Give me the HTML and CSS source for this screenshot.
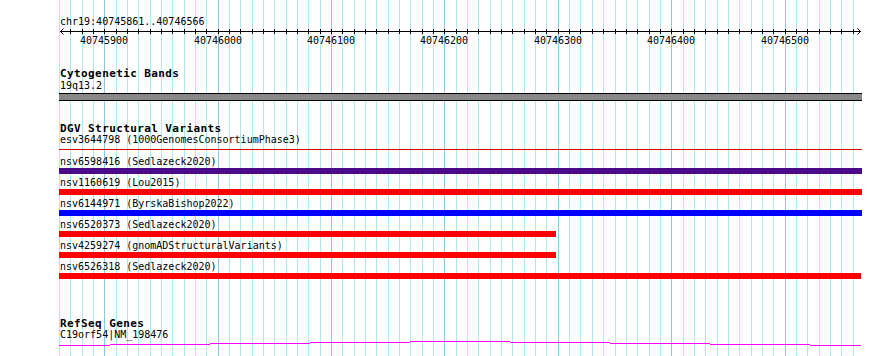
FILE: index.html
```html
<!DOCTYPE html>
<html lang="en">
<head>
  <meta charset="UTF-8">
  <title>chr19:40745861..40746566</title>
  <link rel="stylesheet" href="styles.css">
</head>
<body>
  <div class="browser">
    <svg id="grid" class="grid" width="890" height="356"></svg>

    <div class="tracks">
      <div class="position">chr19:40745861..40746566</div>
      <svg id="ruler" class="ruler" width="803" height="20">
        <line class="axis" x1="1" y1="4.5" x2="802" y2="4.5" />
        <polyline class="arrow" points="4.5,1.5 1.5,4.5 4.5,7.5" />
        <polyline class="arrow" points="798.5,1.5 801.5,4.5 798.5,7.5" />
      </svg>

      <section class="track bands">
        <h2 class="track-title">Cytogenetic Bands</h2>
        <div class="label band-label">19q13.2</div>
        <div class="band"></div>
      </section>

      <section class="track dgv">
        <h2 class="track-title">DGV Structural Variants</h2>
        <div class="item thin">
          <div class="label">esv3644798 (1000GenomesConsortiumPhase3)</div>
          <div class="bar line"></div>
        </div>
        <div class="item">
          <div class="label">nsv6598416 (Sedlazeck2020)</div>
          <div class="bar purple"></div>
        </div>
        <div class="item">
          <div class="label">nsv1160619 (Lou2015)</div>
          <div class="bar red"></div>
        </div>
        <div class="item">
          <div class="label">nsv6144971 (ByrskaBishop2022)</div>
          <div class="bar blue"></div>
        </div>
        <div class="item">
          <div class="label">nsv6520373 (Sedlazeck2020)</div>
          <div class="bar red" style="width: 497px"></div>
        </div>
        <div class="item">
          <div class="label">nsv4259274 (gnomADStructuralVariants)</div>
          <div class="bar red" style="width: 497px"></div>
        </div>
        <div class="item">
          <div class="label">nsv6526318 (Sedlazeck2020)</div>
          <div class="bar red" style="width: 802px"></div>
        </div>
      </section>

      <section class="track refseq">
        <h2 class="track-title">RefSeq Genes</h2>
        <div class="label">C19orf54|NM_198476</div>
        <svg class="gene" width="803" height="7">
          <path d="M0 5.5H51 M51 4.5H151 M151 3.5H251 M251 2.5H351 M351 1.5H451 M451 2.5H551 M551 3.5H651 M651 4.5H751 M751 5.5H802" />
        </svg>
      </section>
    </div>
  </div>

  <script>
    // 10 bp grid across the window, ticks and labels on the ruler
    const NS = 'http://www.w3.org/2000/svg';
    const start = 40745860, left = 58.95, step = 11.338, offset = 59;
    const grid = document.getElementById('grid');
    const ruler = document.getElementById('ruler');

    function add(parent, tag, attrs, text) {
      const el = document.createElementNS(NS, tag);
      for (const k in attrs) el.setAttribute(k, attrs[k]);
      if (text) el.textContent = text;
      parent.appendChild(el);
    }

    for (let k = 0; k <= 70; k++) {
      const x = Math.round(left + k * step);
      const major = k % 10 === 4;
      add(grid, 'rect', { x: x, y: 0, width: 1, height: 356, class: major ? 'major' : 'minor' });
      if (k > 0) add(ruler, 'rect', { x: x - offset, y: 2, width: 1, height: 5, class: 'tick' });
      if (major) add(ruler, 'text', { x: x - offset, y: 17 }, String(start + k * 10));
    }
  </script>
</body>
</html>
```

FILE: styles.css
```css
body {
  margin: 0;
  background: #fff;
  color: #000;
  font-family: "DejaVu Sans Mono", monospace;
  font-size: 10px;
}
.browser {
  position: relative;
  width: 890px;
  height: 356px;
  overflow: hidden;
}
.grid {
  position: absolute;
  top: 0;
  left: 0;
}
.grid .minor {
  fill: #ade9ef;
}
.grid .major {
  fill: #8cc6ea;
}
.tracks {
  position: relative;
  width: 803px;
  padding: 16px 0 0 59px;
}
.position, .label {
  line-height: 11px;
  padding-left: 1px;
  white-space: nowrap;
}
.ruler {
  display: block;
  shape-rendering: crispEdges;
}
.ruler .axis, .ruler .arrow {
  stroke: #000;
  stroke-width: 1;
  fill: none;
}
.ruler .arrow {
  shape-rendering: auto;
}
.ruler .tick {
  fill: #000;
}
.ruler text {
  font-family: "DejaVu Sans Mono", monospace;
  font-size: 10px;
  fill: #000;
  text-anchor: middle;
}
.track-title {
  margin: 0;
  padding-left: 1px;
  font-size: 11px;
  font-weight: bold;
  letter-spacing: 0.4px;
  line-height: 11px;
}
.bands {
  margin-top: 21px;
}
.dgv {
  margin-top: 22px;
}
.refseq {
  margin-top: 36px;
}
.band-label {
  margin-top: 1px;
}
.band {
  margin-top: 2px;
  height: 6px;
  background: #888;
  border-top: 1px solid #000;
  border-bottom: 1px solid #000;
}
.item {
  padding-bottom: 3px;
}
.bar {
  width: 803px;
  height: 6px;
  margin-top: 1px;
}
.item.thin {
  padding-bottom: 6px;
}
.bar.line {
  height: 1px;
  margin-top: 4px;
  background: #dd0000;
}
.bar.purple {
  background: #4b0a88;
}
.bar.red {
  background: #ff0000;
}
.bar.blue {
  background: #0000ff;
}
.gene {
  display: block;
  shape-rendering: crispEdges;
}
.gene path {
  stroke: #ff00ff;
  stroke-width: 1;
  fill: none;
}
```
